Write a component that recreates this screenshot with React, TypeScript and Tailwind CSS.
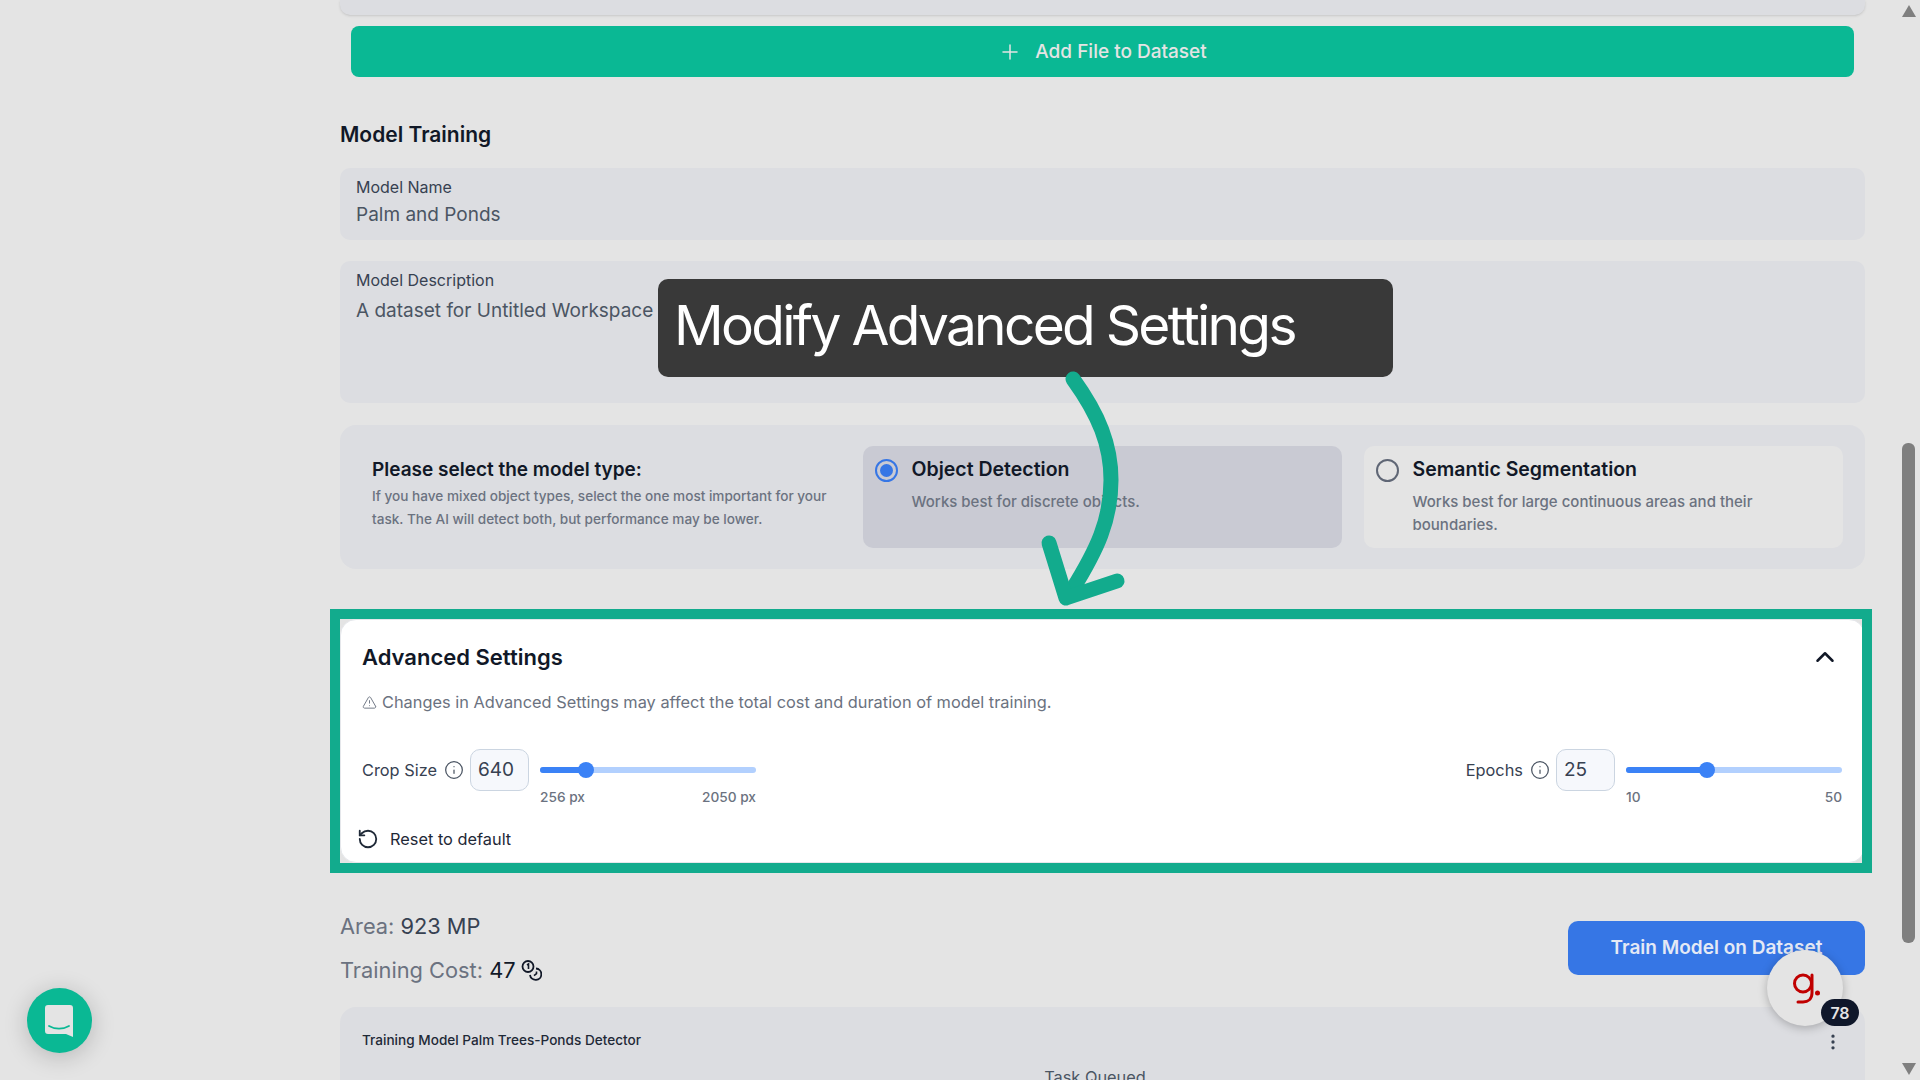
import { ChevronUp, EllipsisVertical, Info, Plus, RotateCcw, TriangleAlert } from "lucide-react";

function Slider({ pct, min, max }: { pct: number; min: string; max: string }) {
  return (
    <div className="w-[216px]">
      <div className="flex h-[42px] items-center">
        <div className="relative h-[6px] w-full rounded-full bg-[#b2d0fe]">
          <div className="h-full rounded-full bg-[#3b82f6]" style={{ width: `${pct}%` }} />
          <div
            className="absolute top-1/2 h-4 w-4 -translate-x-1/2 -translate-y-1/2 rounded-full bg-[#3b82f6]"
            style={{ left: `${pct}%` }}
          />
        </div>
      </div>
      <div className="-mt-1 flex justify-between text-[13.7px] leading-5 font-medium text-[#6b7280]">
        <span>{min}</span>
        <span>{max}</span>
      </div>
    </div>
  );
}

function SettingField({
  label,
  value,
  pct,
  min,
  max,
}: {
  label: string;
  value: string;
  pct: number;
  min: string;
  max: string;
}) {
  return (
    <div className="flex items-start">
      <div className="flex h-[42px] items-center">
        <span className="text-[16.35px] text-[#374151]">{label}</span>
        <Info className="ml-[7px] h-5 w-5 text-[#4b5563]" strokeWidth={1.5} />
        <div className="ml-[6px] flex h-[42px] w-[59px] items-center rounded-[10px] border border-[#cbd5e1] bg-[#f6f8fc] pl-[7px] text-[19px] text-[#374151]">
          {value}
        </div>
      </div>
      <div className="ml-[11px]">
        <Slider pct={pct} min={min} max={max} />
      </div>
    </div>
  );
}

function ModelOption({
  title,
  desc,
  selected,
}: {
  title: string;
  desc: string;
  selected?: boolean;
}) {
  return (
    <div className={`flex rounded-[10px] pl-[12px] pt-[13px] ${selected ? "bg-[#c9cad3]" : "bg-[#e4e4e4]"}`}>
      {selected ? (
        <div className="flex h-[23px] w-[23px] items-center justify-center rounded-full border-2 border-[#3676e5]">
          <div className="h-[13px] w-[13px] rounded-full bg-[#3676e5]" />
        </div>
      ) : (
        <div className="h-[23px] w-[23px] rounded-full border-2 border-[#5f6675]" />
      )}
      <div className="ml-[13.5px]">
        <div className="-mt-[2px] text-[19.5px] leading-[24px] font-semibold text-[#111827]">{title}</div>
        <div className="mt-[9px] w-[360px] text-[15px] leading-[23px] font-medium text-[#6b7280]">{desc}</div>
      </div>
    </div>
  );
}

export default function App() {
  return (
    <div className="relative flex h-[1080px] w-[1920px] overflow-hidden bg-[#e4e4e4] font-['Inter',sans-serif]">
      <main className="ml-[340px] flex w-[1525px] flex-col">
        <div className="h-[15px] shrink-0 rounded-b-[10px] bg-[#dcdde1] shadow-sm" />
        <button className="mx-[11px] mt-[11px] flex h-[51px] shrink-0 items-center justify-center rounded-[8px] bg-[#0ab894] pt-[1px] text-[19px] font-medium text-[#e4e4e4]">
          <Plus className="mr-[13px] h-[24px] w-[24px]" strokeWidth={1.5} />
          Add File to Dataset
        </button>

        <h2 className="mt-[44px] shrink-0 text-[21px] leading-[28px] font-semibold text-[#111827]">Model Training</h2>

        <div className="mt-[19px] h-[72px] shrink-0 rounded-[10px] bg-[#dcdde1] pl-[16px] pt-[7px]">
          <div className="text-[16px] leading-6 text-[#374151]">Model Name</div>
          <div className="mt-[2px] text-[19px] leading-7 text-[#4b5563]">Palm and Ponds</div>
        </div>

        <div className="mt-[21px] h-[142px] shrink-0 rounded-[10px] bg-[#dcdde1] pl-[16px] pt-[7px]">
          <div className="text-[16px] leading-6 text-[#374151]">Model Description</div>
          <div className="mt-[5px] text-[19px] leading-7 text-[#4b5563]">A dataset for Untitled Workspace</div>
        </div>

        <div className="mt-[22px] flex h-[144px] shrink-0 rounded-[16px] bg-[#dcdde1] pl-[32px] pr-[22px]">
          <div className="w-[491px] pt-[31px]">
            <div className="text-[19px] leading-[28px] font-semibold text-[#111827]">Please select the model type:</div>
            <div className="mt-[1px] w-[470px] text-[13.6px] leading-[23px] font-medium text-[#6b7280]">
              If you have mixed object types, select the one most important for your task. The AI will detect both, but
              performance may be lower.
            </div>
          </div>
          <div className="grid flex-1 grid-cols-2 gap-[22px] py-[21px]">
            <ModelOption title="Object Detection" desc="Works best for discrete objects." selected />
            <ModelOption title="Semantic Segmentation" desc="Works best for large continuous areas and their boundaries." />
          </div>
        </div>

        {/* spotlighted card, the frame sits on top of it */}
        <section className="relative mt-[50px] h-[244px] shrink-0 rounded-[16px] border border-gray-200 bg-white pl-[21px] pr-[22px] pt-[23px]">
          <div className="flex items-center justify-between">
            <h3 className="text-[22px] leading-[28px] font-semibold text-[#111827]">Advanced Settings</h3>
            <ChevronUp className="-my-[1px] mr-[2px] h-[30px] w-[30px] text-[#111827]" strokeWidth={2} />
          </div>
          <div className="mt-[19px] flex items-center text-[16.35px] leading-6 text-[#6b7280]">
            <TriangleAlert className="mr-[5px] h-[15px] w-[15px]" strokeWidth={1.5} />
            Changes in Advanced Settings may affect the total cost and duration of model training.
          </div>
          <div className="mt-[35px] flex justify-between">
            <SettingField label="Crop Size" value="640" pct={21.5} min="256 px" max="2050 px" />
            <SettingField label="Epochs" value="25" pct={37.5} min="10" max="50" />
          </div>
          <div className="-ml-[5px] mt-[20px] flex items-center text-[16.35px] leading-6 text-[#1f2937]">
            <RotateCcw className="mr-[11px] h-[22px] w-[22px]" strokeWidth={2} />
            Reset to default
          </div>
          <div className="pointer-events-none absolute -bottom-[11px] -left-[11px] -right-[8px] -top-[11px] border-[10px] border-[#12ab8d]" />
        </section>

        <div className="mt-[49px] flex shrink-0 items-start justify-between">
          <div>
            <div className="text-[21.8px] leading-[28px] text-[#6b7280]">
              Area: <span className="text-[#374151]">923 MP</span>
            </div>
            <div className="mt-4 flex items-center text-[21.8px] leading-[28px] text-[#6b7280]">
              <span className="whitespace-pre">Training Cost: </span>
              <span className="text-[#111827]">47</span>
              <svg className="ml-[5px] h-[21px] w-[21px] text-[#111827]" viewBox="0 0 21 21" fill="none" stroke="currentColor">
                <circle cx="7" cy="6.5" r="5.5" strokeWidth="1.8" />
                <path d="M6 5l1.5-1v5" strokeWidth="1.6" />
                <path d="M15 8.5a5.7 5.7 0 1 1-6 6.5" strokeWidth="1.8" />
                <path d="M15.5 11.5v2.2l-2.500 2" strokeWidth="1.6" />
              </svg>
            </div>
          </div>
          <button className="mt-[9px] h-[54px] w-[297px] rounded-[10px] bg-[#3676e5] text-[19px] font-semibold text-[#e4e9f5]">
            Train Model on Dataset
          </button>
        </div>

        <div className="mt-[23px] min-h-0 flex-1 overflow-hidden rounded-t-[16px] bg-[#dcdde1] pl-[22px] pr-[22px] pt-[23px]">
          <div className="flex items-start justify-between">
            <div className="text-[13.6px] leading-5 font-medium text-[#1f2937]">Training Model Palm Trees-Ponds Detector</div>
            <EllipsisVertical className="mt-[2px] h-5 w-5 text-[#374151]" strokeWidth={2} />
          </div>
          <div className="mt-[13px] pr-[15px] text-center text-[16.35px] leading-6 text-[#4b5563]">Task Queued</div>
        </div>
      </main>

      {/* browser scrollbar */}
      <div className="ml-[37px] flex w-[18px] flex-col pb-[5px] pt-[5px]">
        <svg className="h-3 w-[14px]" viewBox="0 0 14 12">
          <path d="M7 0l7 12H0z" fill="#7f7f7f" />
        </svg>
        <div className="mt-[426px] h-[500px] w-[13px] rounded-b-[6px] rounded-t-[6px] bg-[#7f7f7f]" />
        <svg className="mt-auto h-3 w-[14px]" viewBox="0 0 14 12">
          <path d="M0 0h14L7 12z" fill="#7f7f7f" />
        </svg>
      </div>

      {/* callout */}
      <div className="absolute left-[658px] top-[279px] h-[98px] w-[735px] rounded-[10px] bg-[#393939] pl-[16px] pt-[14px] text-[55px] leading-[64px] tracking-[-2.7px] text-white">
        Modify Advanced Settings
      </div>
      <svg className="absolute left-[1030px] top-[360px] h-[250px] w-[110px]" viewBox="0 0 110 250" fill="none" stroke="#12ab8d" strokeWidth="15" strokeLinecap="round" strokeLinejoin="round">
        <path d="M43 19C69 55 81 85 81 120C81 160 67 190 42 230" />
        <path d="M19 183L36 238L87 221" />
      </svg>

      {/* chat launcher */}
      <div className="absolute left-[27px] top-[988px] flex h-[65px] w-[65px] items-center justify-center rounded-full bg-[#0ab894] pr-[1px] shadow-[0_4px_24px_rgba(0,0,0,0.2)]">
        <svg className="h-8 w-7" viewBox="0 0 28 32">
          <path d="M3 0h22a3 3 0 0 1 3 3v29l-7-3H3a3 3 0 0 1-3-3V3a3 3 0 0 1 3-3z" fill="#e4e4e4" />
          <path d="M4 21c6 3.500 14 3.500 20 0" fill="none" stroke="#0ab894" strokeWidth="1.800" strokeLinecap="round" />
        </svg>
      </div>

      {/* review widget */}
      <div className="absolute left-[1767px] top-[950px] flex h-[76px] w-[76px] items-center justify-center rounded-full bg-[#e4e4e4] pl-[2px] shadow-[0_2px_10px_rgba(0,0,0,0.25)]">
        <svg className="mt-[1px] h-[32px] w-[28px]" viewBox="0 0 28 32" fill="none" stroke="#c00000" strokeWidth="3" strokeLinecap="round">
          <circle cx="11" cy="10.500" r="8.500" />
          <path d="M20 2v18c0 6-4 9-9 9H6" />
          <circle cx="25.500" cy="20" r="2.500" fill="#c00000" stroke="none" />
        </svg>
        <div className="absolute left-[54px] top-[49px] flex h-[27px] w-[38px] items-center justify-center rounded-full bg-[#0f172a] text-[16px] font-semibold text-[#e4e4e4]">
          78
        </div>
      </div>
    </div>
  );
}
